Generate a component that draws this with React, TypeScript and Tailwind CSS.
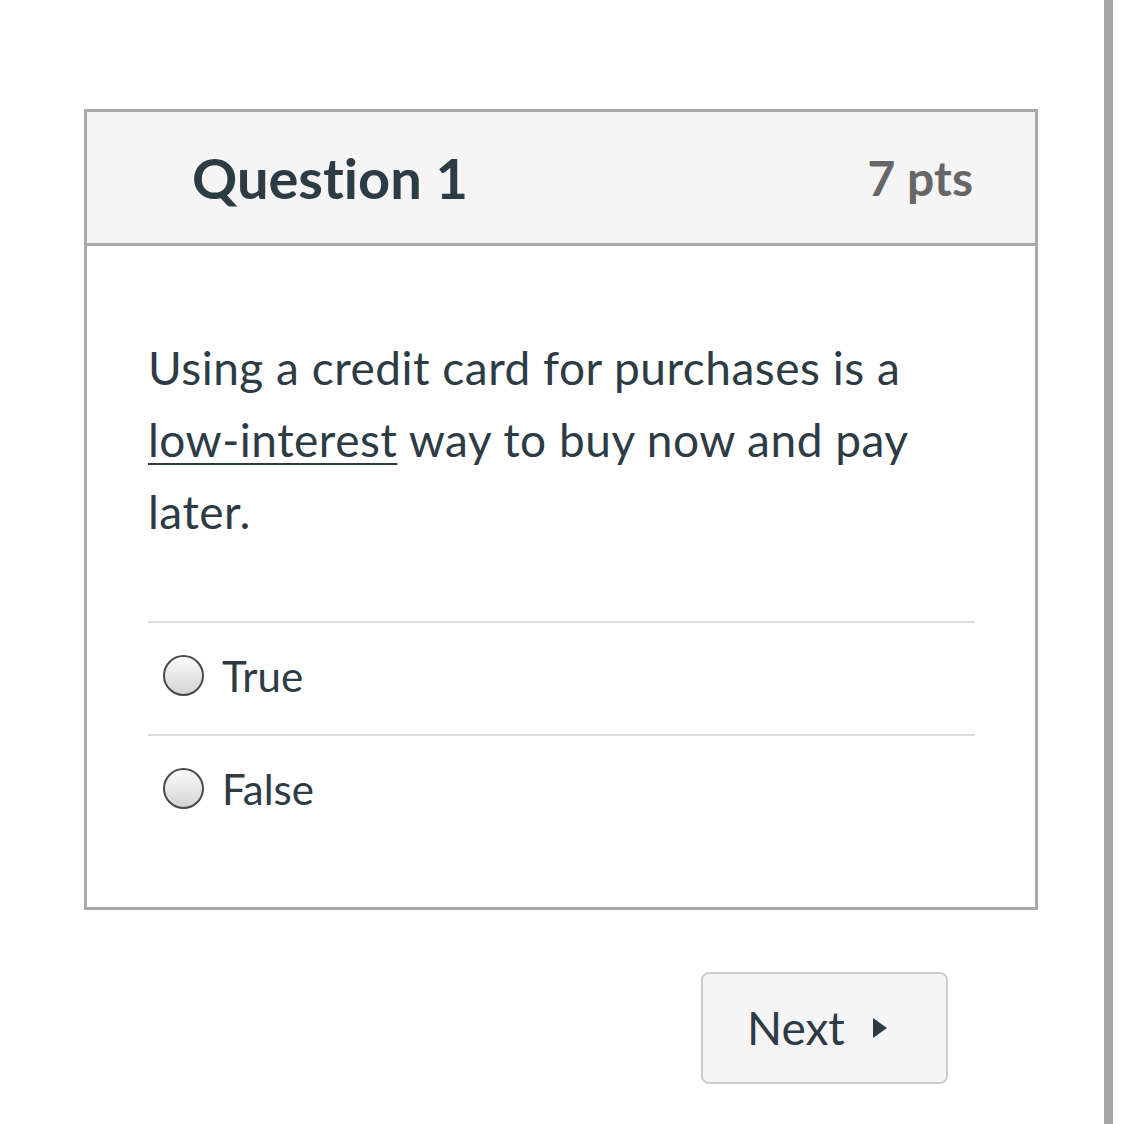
import React from "react";

function Radio() {
  return (
    <span className="block w-[41px] h-[41px] rounded-full border-[2.5px] border-[#4a4a4a] bg-gradient-to-b from-[#fbfbfb] to-[#d4d4d4] shrink-0" />
  );
}

export default function App() {
  const font = { fontFamily: "Lato, 'Noto Sans', sans-serif" };
  return (
    <div className="flex min-h-[1124px] bg-white [font-variant-ligatures:none]" style={font}>
      <div className="w-[1104px] pt-[109px] pl-[84px]">
        <div className="w-[954px] border-[3px] border-[#a9a9a9] bg-white">
          <div className="h-[134px] bg-[#f5f5f5] border-b-[3px] border-[#a9a9a9] flex items-center justify-between pl-[105px] pr-[62px]">
            <span className="text-[56px] font-bold text-[#2d3b45] leading-[1.2]">Question 1</span>
            <span className="text-[48px] font-bold text-[#666666] leading-[1.2]">7 pts</span>
          </div>
          <div className="pt-[86px] pl-[61px] pr-[60px] pb-[60px]">
            <p className="text-[46px] tracking-[0.5px] leading-[72px] text-[#2d3b45]">
              Using a credit card for purchases is a{" "}
              <span className="underline decoration-[2px] underline-offset-[6px] whitespace-nowrap">low-interest</span> way to buy now and pay later.
            </p>
            <div className="mt-[73px]">
              <div className="border-t-2 border-[#dcdcdc] h-[113px] flex items-center gap-[18px] pl-[15px] pb-[6px]">
                <Radio />
                <span className="text-[42px] text-[#2d3b45] leading-none">True</span>
              </div>
              <div className="border-t-2 border-[#dcdcdc] h-[113px] flex items-center gap-[18px] pl-[15px] pb-[6px]">
                <Radio />
                <span className="text-[42px] text-[#2d3b45] leading-none">False</span>
              </div>
            </div>
          </div>
        </div>
        <div className="pl-[617px] pt-[62px]">
          <button className="w-[247px] h-[112px] rounded-[8px] border-2 border-[#c7cdd1] bg-[#f5f5f5] flex items-center pl-[44px] gap-[28px] text-[#2d3b45]">
            <span className="text-[46px] leading-none">Next</span>
            <svg width="14" height="20" viewBox="0 0 14 20"><path d="M0 0 L14 10 L0 20 Z" fill="#2d3b45" /></svg>
          </button>
        </div>
      </div>
      <div className="w-[9px] bg-[#a5a5a5]" />
    </div>
  );
}
